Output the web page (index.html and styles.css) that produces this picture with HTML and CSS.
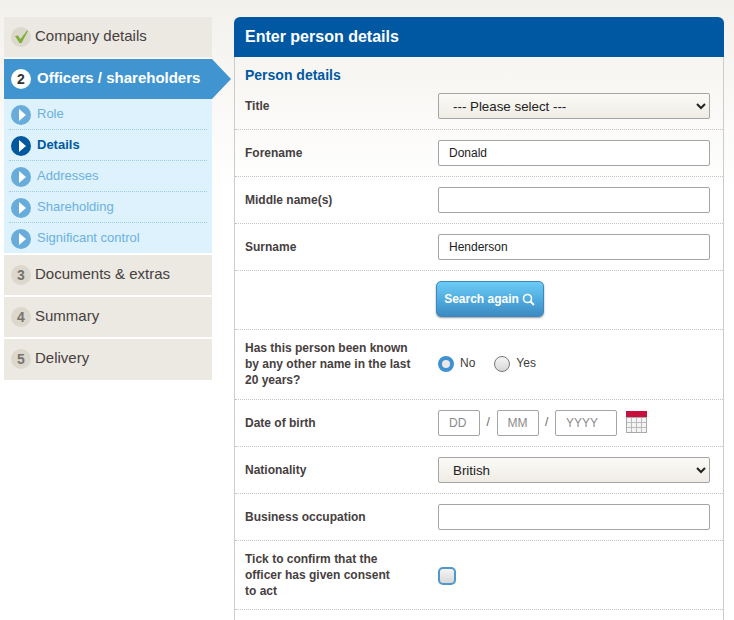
FILE: index.html
```html
<!DOCTYPE html>
<html lang="en">
<head>
  <meta charset="UTF-8">
  <title>Enter person details</title>
  <link rel="stylesheet" href="styles.css">
</head>
<body>
  <div class="page">
    <!-- Steps -->
    <div class="steps">
      <div class="step">
        <span class="num">
          <svg width="16" height="16" viewBox="0 0 16 16"><path d="M2 7 L5 6.5 L7.5 10 L14 1.5 L15 2 L8.5 14 L6.5 14 Z" fill="#7fb03c"/></svg>
        </span>
        Company details
      </div>
      <div class="step active"><span class="num">2</span>Officers / shareholders</div>
      <div class="substeps">
        <div class="sub"><span class="play"></span>Role</div>
        <div class="sub current"><span class="play"></span>Details</div>
        <div class="sub"><span class="play"></span>Addresses</div>
        <div class="sub"><span class="play"></span>Shareholding</div>
        <div class="sub"><span class="play"></span>Significant control</div>
      </div>
      <div class="step"><span class="num">3</span>Documents &amp; extras</div>
      <div class="step"><span class="num">4</span>Summary</div>
      <div class="step"><span class="num">5</span>Delivery</div>
    </div>

    <!-- Form -->
    <div class="panel">
      <h1>Enter person details</h1>
      <div class="panel-body">
        <h2>Person details</h2>

        <div class="row">
          <label>Title</label>
          <select class="field"><option>--- Please select ---</option></select>
        </div>
        <div class="row">
          <label>Forename</label>
          <input class="field" type="text" value="Donald">
        </div>
        <div class="row">
          <label>Middle name(s)</label>
          <input class="field" type="text">
        </div>
        <div class="row">
          <label>Surname</label>
          <input class="field" type="text" value="Henderson">
        </div>
        <div class="row search">
          <button class="btn" type="button">
            Search again
            <svg width="13" height="13" viewBox="0 0 13 13"><circle cx="5.5" cy="5.5" r="4" fill="none" stroke="#fff" stroke-width="1.6"/><path d="M8.5 8.5 L12 12" stroke="#fff" stroke-width="2"/></svg>
          </button>
        </div>
        <div class="row known">
          <label>Has this person been known by any other name in the last 20 years?</label>
          <div class="radios">
            <span class="radio on"></span><span class="opt">No</span>
            <span class="radio"></span><span class="opt">Yes</span>
          </div>
        </div>
        <div class="row">
          <label>Date of birth</label>
          <div class="dob">
            <input class="part" type="text" placeholder="DD">
            <span class="sep">/</span>
            <input class="part" type="text" placeholder="MM">
            <span class="sep">/</span>
            <input class="part year" type="text" placeholder="YYYY">
            <svg class="cal" width="21" height="22" viewBox="0 0 21 22">
              <rect x="0" y="0" width="21" height="6" fill="#c8103e"/>
              <rect x="0.5" y="6.5" width="20" height="15" fill="#f4f4f4" stroke="#aaa"/>
              <path d="M5.5 7 V21 M10.5 7 V21 M15.5 7 V21 M1 11.5 H20 M1 16.5 H20" stroke="#bbb" fill="none"/>
            </svg>
          </div>
        </div>
        <div class="row">
          <label>Nationality</label>
          <select class="field"><option>British</option></select>
        </div>
        <div class="row">
          <label>Business occupation</label>
          <input class="field" type="text">
        </div>
        <div class="row consent">
          <label>Tick to confirm that the officer has given consent to act</label>
          <span class="tick"></span>
        </div>
      </div>
    </div>
  </div>
</body>
</html>
```

FILE: styles.css
```css
html, body {
  margin: 0;
  padding: 0;
}

body {
  font-family: "Liberation Sans", Arial, sans-serif;
  background: linear-gradient(#f3f1ec, #ffffff 190px) no-repeat;
  color: #3f3b3a;
}

.page {
  display: flex;
  align-items: flex-start;
  padding: 17px 10px 0 4px;
  gap: 22px;
}

/* steps */
.steps {
  width: 208px;
  flex: none;
}

.step {
  position: relative;
  display: flex;
  align-items: flex-start;
  height: 40px;
  margin-bottom: 2px;
  padding: 10px 0 0 7px;
  box-sizing: border-box;
  background-color: #ece9e2;
  font-size: 15px;
  line-height: 17px;
  color: #46403f;
}

.step:last-child {
  height: 41px;
}

.num {
  display: flex;
  align-items: center;
  justify-content: center;
  flex: none;
  width: 20px;
  height: 20px;
  margin-right: 4px;
  border-radius: 50%;
  background-color: #dcd8cd;
  color: #77736e;
  font-size: 14px;
  font-weight: bold;
}

.step.active {
  margin-bottom: 0;
  background-color: #4095d0;
  color: #fff;
  font-weight: bold;
}

.step.active:after {
  content: "";
  position: absolute;
  left: 100%;
  top: 0;
  border-style: solid;
  border-width: 20px 0 20px 19px;
  border-color: transparent transparent transparent #4095d0;
}

.step.active .num {
  margin-right: 6px;
  background-color: #fff;
  color: #333;
}

.substeps {
  margin-bottom: 2px;
  padding: 0 5px;
  background-color: #ddf2fd;
}

.sub {
  display: flex;
  align-items: flex-start;
  height: 31px;
  padding: 6px 0 0 2px;
  box-sizing: border-box;
  border-bottom: 1px dotted #9ccbe6;
  font-size: 13px;
  line-height: 18px;
  color: #6cb0de;
}

.sub:last-child {
  height: 30px;
  border-bottom: 0;
}

.sub.current {
  color: #00589f;
  font-weight: bold;
}

.play {
  position: relative;
  flex: none;
  width: 20px;
  height: 20px;
  margin-right: 6px;
  border-radius: 50%;
  background-color: #68acdc;
}

.sub.current .play {
  background-color: #00589f;
}

.play:before {
  content: "";
  position: absolute;
  left: 8px;
  top: 4px;
  border-style: solid;
  border-width: 6px 0 6px 7px;
  border-color: transparent transparent transparent #fff;
}

/* panel */
.panel {
  width: 490px;
  flex: none;
}

.panel h1 {
  margin: 0;
  height: 40px;
  padding-left: 11px;
  line-height: 40px;
  box-sizing: border-box;
  border-radius: 6px 6px 0 0;
  background-color: #0058a2;
  color: #fff;
  font-size: 16px;
}

.panel-body {
  padding-bottom: 30px;
  border: 1px solid #cccccc;
  border-width: 0 1px;
}

.panel-body h2 {
  margin: 0;
  padding: 11px 10px 0;
  color: #0058a2;
  font-size: 14px;
  line-height: 15px;
}

.row {
  display: flex;
  align-items: center;
  padding: 10px 13px 10px 10px;
  border-bottom: 1px dotted #c4c4c4;
}

.row label {
  flex: none;
  width: 170px;
  margin-right: 23px;
  font-size: 12px;
  font-weight: bold;
  line-height: 16px;
  color: #46403f;
}

.row.consent label {
  width: 155px;
  margin-right: 38px;
}

.field {
  width: 272px;
  height: 26px;
  box-sizing: border-box;
  border: 1px solid #a5a5a5;
  border-radius: 2px;
  font-family: "Liberation Sans", Arial, sans-serif;
  font-size: 12px;
  color: #222;
  background-color: #fff;
  padding: 0 10px;
}

select.field {
  font-size: 13.33px;
  background: linear-gradient(#fbfaf7, #efece4);
}

.search {
  justify-content: center;
  padding: 10px 12px 12px 0;
}

.btn {
  display: flex;
  align-items: center;
  justify-content: center;
  gap: 3px;
  width: 108px;
  height: 36px;
  margin-left: 33px;
  padding: 0;
  border: 1px solid #3d88bd;
  border-radius: 5px;
  background: linear-gradient(#6ccbf6, #51addf 50%, #3c8ac2);
  box-shadow: 0 1px 2px rgba(0, 0, 0, 0.4);
  color: #fff;
  font-family: "Liberation Sans", Arial, sans-serif;
  font-size: 12px;
  font-weight: bold;
}

.known {
  padding-bottom: 11px;
}

.radios {
  display: flex;
  align-items: center;
  margin-bottom: 1px;
  font-size: 12px;
}

.radio {
  width: 16px;
  height: 16px;
  box-sizing: border-box;
  border: 1px solid #777;
  border-radius: 50%;
  background: linear-gradient(#f6f6f6, #d6d6d6);
}

.radio.on {
  border: 4px solid #3f92cf;
  background: #e8e8e8;
}

.opt {
  margin: -2px 19px 0 6px;
}

.dob {
  display: flex;
  align-items: center;
}

.part {
  width: 42px;
  height: 26px;
  box-sizing: border-box;
  border: 1px solid #a5a5a5;
  border-radius: 2px;
  padding: 0 0 0 10px;
  font-family: "Liberation Sans", Arial, sans-serif;
  font-size: 12px;
  background-color: #fff;
}

.part::placeholder {
  color: #8a8a8a;
}

.part.year {
  width: 62px;
}

.sep {
  width: 16.5px;
  margin-top: -2px;
  text-align: center;
  font-size: 12px;
  color: #666;
}

.cal {
  margin: -2px 0 0 9px;
}

.tick {
  width: 18px;
  height: 18px;
  margin-top: 1px;
  box-sizing: border-box;
  border: 2px solid #4f97cc;
  border-radius: 5px;
  background: linear-gradient(#f4f4f4, #d8d8d8);
}
```
